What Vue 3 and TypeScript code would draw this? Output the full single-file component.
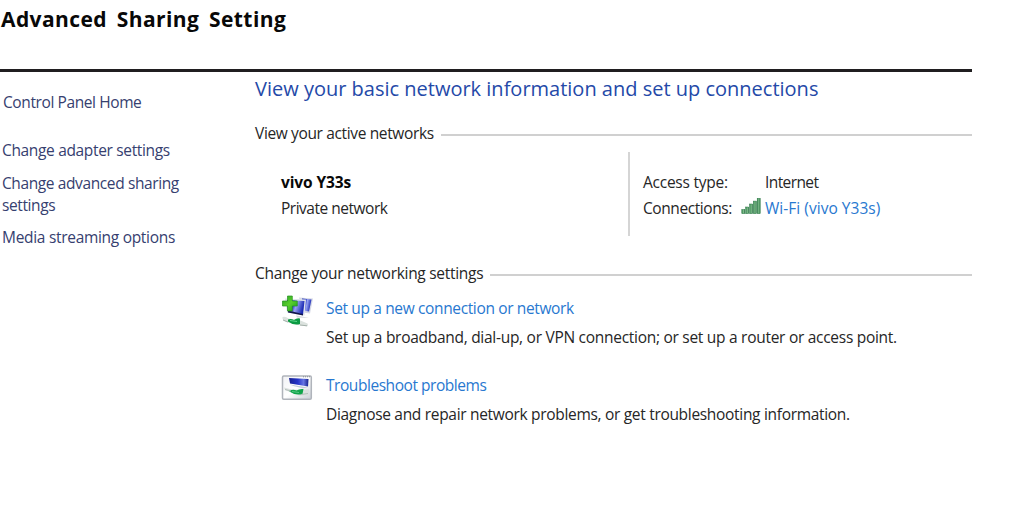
<script setup lang="ts">
interface Task {
  kind: 'connect' | 'repair'
  title: string
  detail: string
}

const tasks: Task[] = [
  {
    kind: 'connect',
    title: 'Set up a new connection or network',
    detail: 'Set up a broadband, dial-up, or VPN connection; or set up a router or access point.',
  },
  {
    kind: 'repair',
    title: 'Troubleshoot problems',
    detail: 'Diagnose and repair network problems, or get troubleshooting information.',
  },
]
</script>

<template>
  <div class="page">
    <h1 class="title">Advanced Sharing Setting</h1>
    <div class="window">
      <nav class="side">
        <a class="home">Control Panel Home</a>
        <a class="adapter">Change adapter settings</a>
        <a class="sharing">Change advanced sharing<br />settings</a>
        <a class="media">Media streaming options</a>
      </nav>
      <main class="main">
        <h2 class="heading">View your basic network information and set up connections</h2>
        <div class="section"><span class="active-label">View your active networks</span><i class="rule" /></div>
        <div class="network">
          <div class="identity">
            <b class="ssid">vivo Y33s</b>
            <p class="profile">Private network</p>
          </div>
          <div class="details">
            <span class="label access">Access type:</span>
            <span class="value internet">Internet</span>
            <span class="label conn">Connections:</span>
            <span class="value wifi">
              <svg class="signal" width="20" height="18" viewBox="0 0 20 18">
                <defs>
                  <linearGradient id="bar" x1="0" x2="1" y1="0" y2="0">
                    <stop offset="0" stop-color="#2c8048" />
                    <stop offset=".55" stop-color="#83be8e" />
                    <stop offset="1" stop-color="#216f3b" />
                  </linearGradient>
                </defs>
                <g fill="url(#bar)" stroke="#2c7846" stroke-width=".5">
                  <rect x=".8" y="11.5" width="3" height="4.2" />
                  <rect x="4.7" y="9" width="3" height="6.7" />
                  <rect x="8.6" y="6" width="3" height="9.7" />
                  <rect x="12.4" y="3.1" width="3" height="12.6" />
                  <rect x="16.2" y=".3" width="3" height="15.4" />
                </g>
              </svg>
              <a class="wifi-link">Wi-Fi (vivo Y33s)</a>
            </span>
          </div>
        </div>
        <div class="section second"><span class="change-label">Change your networking settings</span><i class="rule" /></div>
        <div v-for="t in tasks" :key="t.kind" class="task" :class="t.kind">
          <svg v-if="t.kind === 'connect'" class="icon" width="34" height="34" viewBox="0 0 34 34">
            <defs>
              <linearGradient id="screen" x1="0" x2="1" y1="0" y2=".25">
                <stop offset="0" stop-color="#0e1fa8" />
                <stop offset=".4" stop-color="#2434c4" />
                <stop offset=".58" stop-color="#98a3f2" />
                <stop offset="1" stop-color="#1a29b4" />
              </linearGradient>
              <linearGradient id="plus" x1="0" x2="1" y1="0" y2="1">
                <stop offset="0" stop-color="#279e26" />
                <stop offset=".5" stop-color="#5bd02c" />
                <stop offset="1" stop-color="#159b20" />
              </linearGradient>
            </defs>
            <path d="M18 2.5l14 1-3 15-7-1z" fill="#d5d8e6" />
            <path d="M21 3.5l9.5 1-2.500 12-6-1z" fill="url(#screen)" />
            <path d="M4 3.500l21 1-1.500 16-17.500-3z" fill="#dfe3ec" />
            <path d="M6 5l17.500 1-1.500 13.500-15-3.500z" fill="url(#screen)" />
            <path d="M7 15.500l15 3.500v1.500L7 17.500z" fill="#10164c" />
            <path d="M15 20.500l6 1 7 1.500-12-.5z" fill="#d5d9dd" />
            <path d="M1.500 22q3-1 6 1.500l12 2 7 3q1.500 3-1.500 2.800l-8-1.300-12-3q-4-2-3.500-5z" fill="#dbe2de" />
            <path d="M7 24.500q3-1 6 .5 3-2.500 6-1.500v5.500q-6 2-12-2.500z" fill="#0c9b43" />
            <path d="M9 25.500l7 1" stroke="#5cd58b" />
            <path d="M2 25l5 2m12 3 7 .8" stroke="#a5b1ab" />
            <path d="M6.500 1h4.800v5h5v5h-5v5h-4.800v-5h-5V6h5z" fill="url(#plus)" stroke="#27921f" stroke-width=".7" />
          </svg>
          <svg v-else class="icon" width="34" height="34" viewBox="0 0 34 34">
            <defs>
              <linearGradient id="panel" x1="0" x2="1" y1="0" y2="1">
                <stop offset="0" stop-color="#f0f1f4" />
                <stop offset=".5" stop-color="#fff" />
                <stop offset="1" stop-color="#cbd0d7" />
              </linearGradient>
              <linearGradient id="display" x1="0" x2="1">
                <stop offset="0" stop-color="#17208f" />
                <stop offset=".45" stop-color="#2534c9" />
                <stop offset=".75" stop-color="#6675e2" />
                <stop offset="1" stop-color="#14208b" />
              </linearGradient>
            </defs>
            <rect x="1.500" y="1" width="28.800" height="23.200" rx="1.200" fill="url(#panel)" stroke="#b0b4bb" stroke-width="1.500" />
            <path d="M8 3l19.500 1-.5 7.500-18-3z" fill="url(#display)" />
            <path d="M9 9.500l18 3-5 .8-9-2z" fill="#c5ccd8" />
            <path d="M22 1.800h7" stroke="#858b93" stroke-dasharray="1 1" />
            <path d="M3 12.500l8 2 11 .5 6-1v6l-9 1-15-6z" fill="#dbe1df" />
            <path d="M8.500 15.500q4-1.500 7 0 3-2 7-1.500l-1 5q-7 2-13-2.500z" fill="#11a54b" />
            <path d="M4 14.500l6 1.500m10 3.500 7-1" stroke="#b3bfba" />
            <path d="M11 16.500l7 1" stroke="#55c882" />
          </svg>
          <div class="copy">
            <a class="task-title">{{ t.title }}</a>
            <p class="detail">{{ t.detail }}</p>
          </div>
        </div>
      </main>
    </div>
  </div>
</template>

<style>
body {
  margin: 0;
  background: #fff;
}
</style>

<style scoped>
.page {
  width: 1019px;
  height: 511px;
  overflow: hidden;
  background: #fff;
  color: #262626;
  font: 15.5px/22px "Open Sans", "Noto Sans", sans-serif;
  letter-spacing: -0.34px;
  white-space: nowrap;
}
h1, h2, p { margin: 0; }
.title {
  height: 69px;
  padding: 5px 0 0 1px;
  box-sizing: border-box;
  color: #080808;
  font: 700 21px/28px "Open Sans", sans-serif;
  letter-spacing: 0.4px;
  word-spacing: 4px;
}
.window {
  width: 972px;
  border-top: 3px solid #201e20;
  box-sizing: border-box;
  display: grid;
  grid-template-columns: 255px 717px;
}
.side {
  display: flex;
  flex-direction: column;
  padding: 19px 0 0 2px;
  color: #36406f;
}
.home { letter-spacing: -0.4px; padding-left: 1px; }
.adapter { margin-top: 26px; }
.sharing { margin-top: 11px; letter-spacing: -0.39px; }
.media { margin-top: 10px; letter-spacing: -0.3px; }
.heading {
  height: 34px;
  padding-top: 3px;
  box-sizing: border-box;
  color: #2449a8;
  font-size: 20px;
  font-weight: 400;
  line-height: 28px;
  letter-spacing: 0;
}
.section {
  display: flex;
  height: 22px;
  margin-top: 16px;
}
.active-label { letter-spacing: -0.36px; }
.change-label { letter-spacing: -0.29px; }
.rule {
  flex: 1;
  height: 2px;
  margin: 12px 0 0 7px;
  background: #d0d0d0;
}
.network {
  display: grid;
  grid-template-columns: 373px 344px;
  height: 84px;
  margin-top: 8px;
}
.identity { padding: 19px 0 0 26px; }
.ssid { display: block; color: #080808; letter-spacing: -0.1px; }
.profile { margin-top: 4px; letter-spacing: -0.49px; }
.details {
  display: grid;
  grid-template-columns: 98px 200px;
  grid-template-rows: 22px 22px;
  row-gap: 4px;
  column-gap: 0;
  padding: 19px 0 0 13px;
  border-left: 2px solid #d5d5d5;
}
.access { letter-spacing: -0.25px; }
.conn { letter-spacing: -0.42px; }
.internet { letter-spacing: -0.6px; }
.value { padding-left: 24px; }
.wifi {
  display: flex;
  padding-left: 0;
  color: #2878d0;
  letter-spacing: 0.03px;
}
.signal { flex: none; margin: 1px 4px 0 0; }
.section.second { margin-top: 26px; }
.task {
  display: grid;
  grid-template-columns: 45px 600px;
  margin-left: 26px;
}
.connect { margin-top: 13px; }
.repair { margin-top: 26px; }
.icon { margin-top: -2px; }
.repair .icon { margin-top: 1px; }
.task-title { display: block; color: #2878d0; letter-spacing: -0.36px; }
.repair .task-title { letter-spacing: -0.45px; }
.detail { margin-top: 7px; letter-spacing: -0.28px; }
.repair .detail { letter-spacing: -0.31px; }
</style>
